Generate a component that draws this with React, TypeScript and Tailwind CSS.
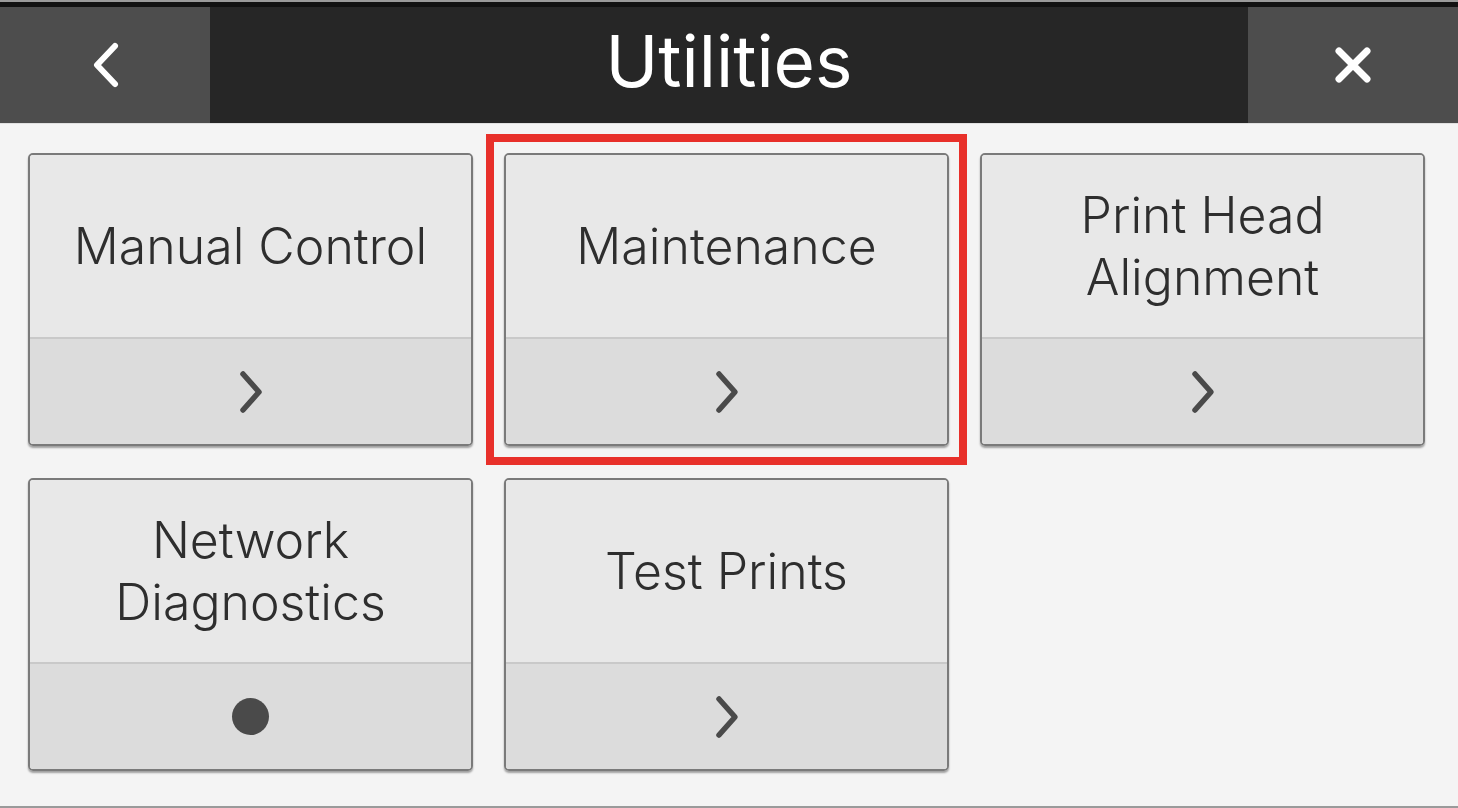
import React from "react";

const font = { fontFamily: "Inter, 'Noto Sans', sans-serif" };

function Chevron() {
  return (
    <svg width="34" height="44" viewBox="0 0 34 44" fill="none">
      <path d="M9 4 L25 22 L9 40" stroke="#4a4a4a" strokeWidth="5.5" strokeLinecap="round" strokeLinejoin="round" />
    </svg>
  );
}

function Card({ label, dot }: { label: React.ReactNode; dot?: boolean }) {
  return (
    <div className="flex h-[293px] w-[445px] flex-col overflow-hidden rounded-[5px] border-2 border-[#7a7a7a] shadow-[0_2px_2px_rgba(0,0,0,0.35)]">
      <div className="flex h-[182px] items-center justify-center bg-[#e8e8e8] text-center text-[50px] font-light leading-[62px] text-[#2e2e2e]">
        {label}
      </div>
      <div className="h-[2px] bg-[#c9c9c9]" />
      <div className="flex flex-1 items-center justify-center bg-[#dcdcdc]">
        {dot ? <div className="h-[37px] w-[37px] rounded-full bg-[#4a4a4a]" /> : <Chevron />}
      </div>
    </div>
  );
}

export default function App() {
  return (
    <div className="flex h-[808px] w-[1458px] flex-col bg-[#f4f4f4]" style={font}>
      <div className="h-[2px] bg-[#9a9a9a]" />
      <div className="h-[5px] bg-[#111111]" />
      <div className="flex h-[116px] bg-[#262626]">
        <div className="flex w-[210px] items-center justify-center bg-[#4d4d4d]">
          <svg width="40" height="50" viewBox="0 0 40 50" fill="none">
            <path d="M30 6 L12 25 L30 44" stroke="#ffffff" strokeWidth="6" strokeLinecap="round" strokeLinejoin="round" />
          </svg>
        </div>
        <div className="flex flex-1 items-center justify-center pb-[8px] text-[71px] font-normal leading-none text-white">Utilities</div>
        <div className="flex w-[210px] items-center justify-center bg-[#4d4d4d]">
          <svg width="40" height="40" viewBox="0 0 40 40" fill="none">
            <path d="M6 6 L34 34 M34 6 L6 34" stroke="#ffffff" strokeWidth="7" strokeLinecap="round" />
          </svg>
        </div>
      </div>
      <div className="h-[1px] bg-[#e0e0e0]" />
      <div className="flex flex-1 flex-col border-b-2 border-[#9a9a9a] pl-[28px] pt-[29px]">
        <div className="flex gap-[31px]">
          <Card label="Manual Control" />
          <div className="relative">
            <div className="pointer-events-none absolute -bottom-[19px] -left-[18px] -right-[18px] -top-[19px] border-[8px] border-[#e8302a]" />
            <Card label="Maintenance" />
          </div>
          <Card label={<span>Print Head<br />Alignment</span>} />
        </div>
        <div className="mt-[32px] flex gap-[31px]">
          <Card label={<span>Network<br />Diagnostics</span>} dot />
          <Card label="Test Prints" />
        </div>
      </div>
    </div>
  );
}
